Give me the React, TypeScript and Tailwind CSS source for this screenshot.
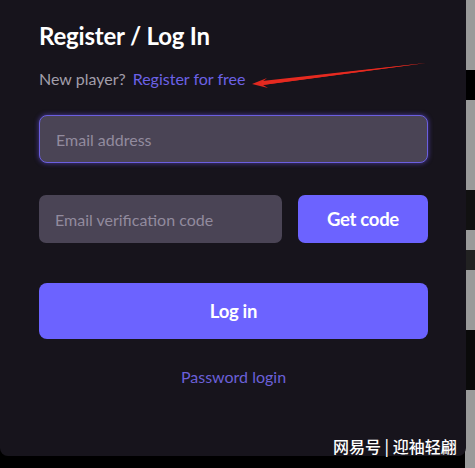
import React from "react";

export default function App() {
  return (
    <div className="relative w-[475px] h-[468px] bg-black overflow-hidden" style={{ fontFamily: "Lato, 'Noto Sans CJK SC', sans-serif" }}>
      {/* right strip background */}
      <div className="absolute right-0 top-0 w-[10px] h-[468px] bg-[#9a9a9a]">
        <div className="absolute top-[70px] left-0 w-[10px] h-[30px] bg-black" />
        <div className="absolute top-[190px] left-0 w-[10px] h-[40px] bg-[#111]" />
        <div className="absolute top-[250px] left-0 w-[10px] h-[20px] bg-[#222]" />
        <div className="absolute top-[330px] left-0 w-[10px] h-[60px] bg-[#0a0a0a]" />
      </div>
      <div className="relative w-[466px] h-[456px] bg-[#17141c] rounded-b-[8px] px-[39px] pt-[21px] flex flex-col">
        <h1 className="text-white font-bold text-[24px] leading-[30px] tracking-[-0.2px]">Register / Log In</h1>
        <p className="mt-[18px] text-[16px] leading-[20px] text-[#a29eaa]">
          New player?
          <span className="ml-[7px] text-[#6c62e6]">Register for free</span>
        </p>
        <div className="mt-[26px] h-[48px] w-[389px] rounded-[8px] border-[1.5px] border-[#6b5fe0] bg-[#4a4455] shadow-[0_0_4px_1px_rgba(100,80,220,0.5)] flex items-center px-[16px] pt-[2px]">
          <span className="text-[#928b9e] text-[16px]">Email address</span>
        </div>
        <div className="mt-[32px] flex gap-[16px] w-[389px]">
          <div className="h-[48px] w-[243px] rounded-[7px] bg-[#4a4455] flex items-center px-[16px] pt-[2px]">
            <span className="text-[#928b9e] text-[16px]">Email verification code</span>
          </div>
          <div className="h-[48px] flex-1 rounded-[7px] bg-[#6c63ff] flex items-center justify-center pt-[2px]">
            <span className="text-white font-bold text-[18.5px] tracking-[-0.3px]">Get code</span>
          </div>
        </div>
        <div className="mt-[40px] h-[56px] w-[389px] rounded-[8px] bg-[#6c63ff] flex items-center justify-center pt-[2px]">
          <span className="text-white font-bold text-[18.5px] tracking-[-0.3px]">Log in</span>
        </div>
        <p className="mt-[26px] text-center w-[389px] text-[16px] text-[#6b60d8]">Password login</p>
      </div>
      {/* watermark */}
      <div className="absolute left-[333px] top-[436px] text-white text-[16px] font-medium leading-[20px] whitespace-nowrap" style={{ fontFamily: "'Noto Sans CJK SC', sans-serif" }}>
        网易号 | 迎袖轻翩
      </div>
      {/* red arrow */}
      <svg className="absolute left-0 top-0" width="475" height="468">
        <path d="M426 63 L262 82 L267 78 L252 84 L268 88 L263 85 Z" fill="#e0281f" />
        <path d="M426 63 L262 81 L262 85 Z" fill="#e52a20" />
      </svg>
    </div>
  );
}
